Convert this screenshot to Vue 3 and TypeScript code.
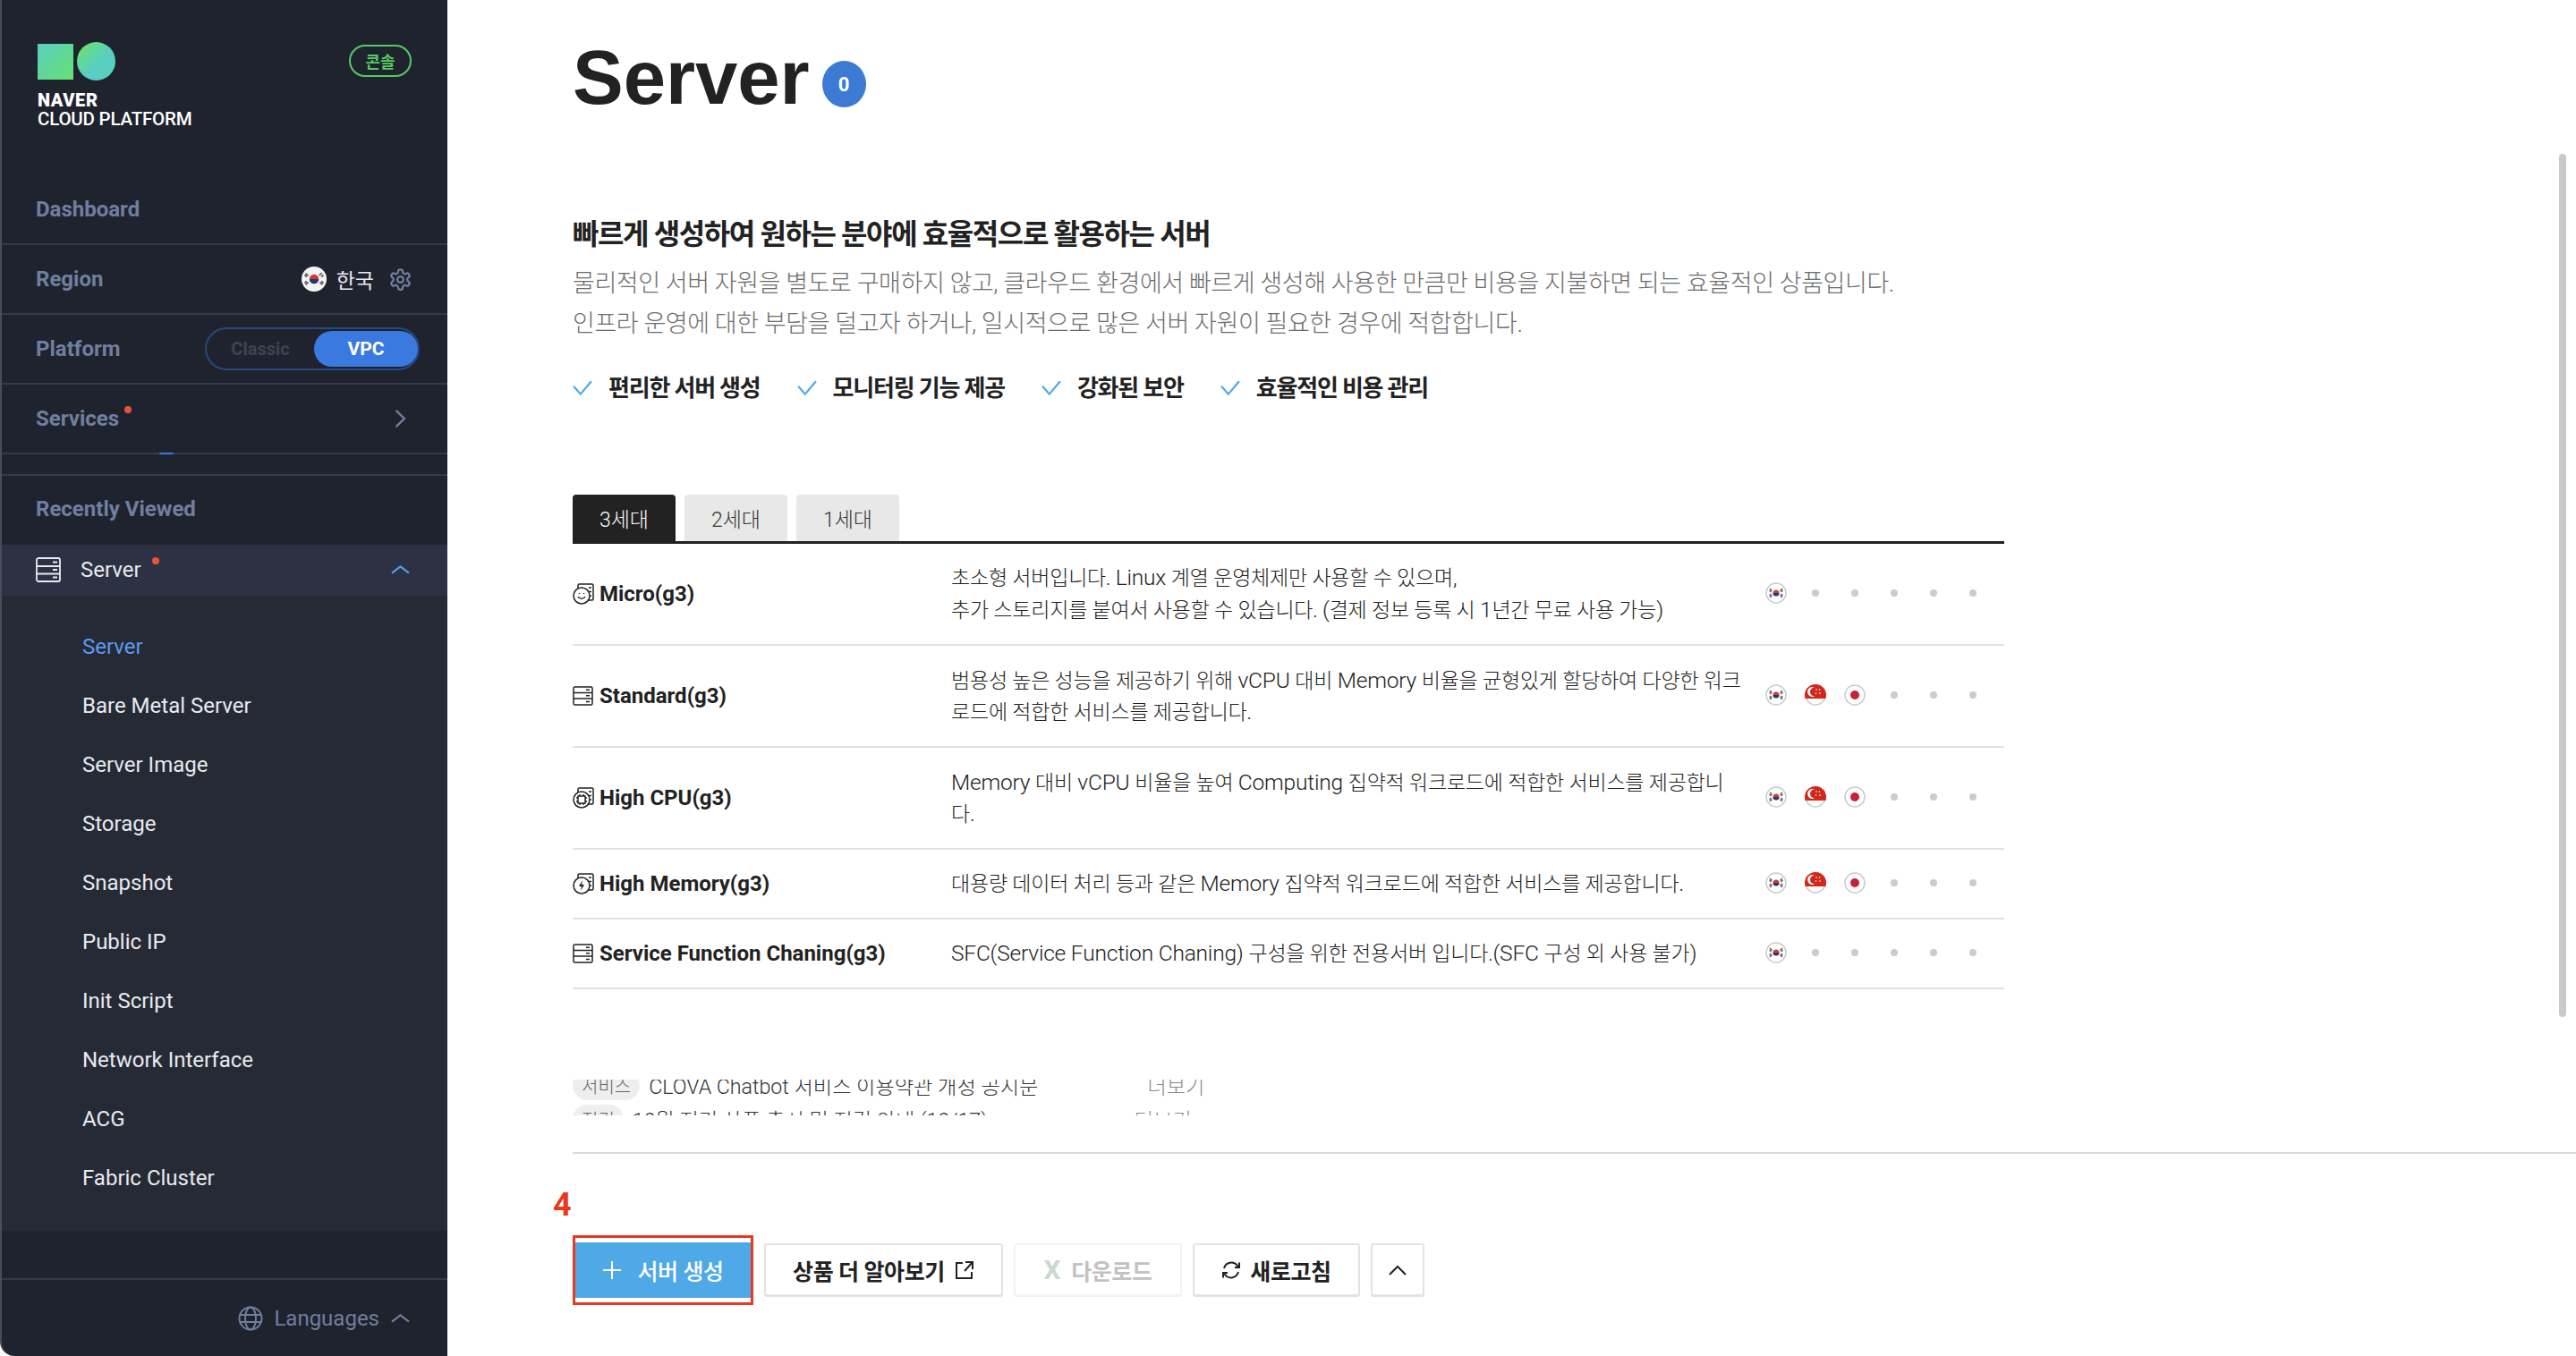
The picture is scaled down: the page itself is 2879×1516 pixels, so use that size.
<template>
  <div class="page">
    <aside class="sidebar">
      <div class="logo-area">
        <div class="logo">
          <div class="logo-shapes">
            <span class="logo-square"></span>
            <span class="logo-circle"></span>
          </div>
          <div class="logo-naver">NAVER</div>
          <div class="logo-cloud">CLOUD PLATFORM</div>
        </div>
        <span class="console-badge">콘솔</span>
      </div>

      <div class="side-row"><span class="side-label">Dashboard</span></div>
      <div class="side-row">
        <span class="side-label">Region</span>
        <div class="region">
          <svg class="region-flag" viewBox="0 0 24 24">
            <circle cx="12" cy="12" r="12" fill="#f4f4f4" />
            <path d="M7.500 12a4.500 4.500 0 0 1 9 0z" fill="#d8392c" />
            <path d="M7.500 12a4.500 4.500 0 0 0 9 0z" fill="#26337e" />
            <path d="M4 6.500l2.500 2.500M3 8l2 2M19.500 6l-2.500 2.500M21 8l-2 2M4 17.500l2.500-2.500M3 16l2-2M20 17.500L17.500 15M21 16l-2-2" stroke="#555" stroke-width="1.400" />
          </svg>
          <span class="region-name">한국</span>
          <svg class="gear" viewBox="0 0 24 24" fill="none" stroke="#6f7f9f" stroke-width="2">
            <path d="M12.220 2h-.44a2 2 0 0 0-2 2v.18a2 2 0 0 1-1 1.730l-.43.250a2 2 0 0 1-2 0l-.15-.08a2 2 0 0 0-2.730.730l-.22.380a2 2 0 0 0 .73 2.730l.15.1a2 2 0 0 1 1 1.720v.51a2 2 0 0 1-1 1.740l-.15.09a2 2 0 0 0-.73 2.730l.22.380a2 2 0 0 0 2.730.730l.15-.08a2 2 0 0 1 2 0l.43.250a2 2 0 0 1 1 1.730V20a2 2 0 0 0 2 2h.44a2 2 0 0 0 2-2v-.18a2 2 0 0 1 1-1.730l.43-.25a2 2 0 0 1 2 0l.15.08a2 2 0 0 0 2.730-.73l.22-.39a2 2 0 0 0-.73-2.730l-.15-.08a2 2 0 0 1-1-1.740v-.5a2 2 0 0 1 1-1.740l.15-.09a2 2 0 0 0 .73-2.730l-.22-.38a2 2 0 0 0-2.730-.73l-.15.08a2 2 0 0 1-2 0l-.43-.25a2 2 0 0 1-1-1.730V4a2 2 0 0 0-2-2z" />
            <circle cx="12" cy="12" r="3" />
          </svg>
        </div>
      </div>
      <div class="side-row">
        <span class="side-label">Platform</span>
        <div class="platform-toggle">
          <span class="platform-classic">Classic</span>
          <span class="platform-vpc">VPC</span>
        </div>
      </div>
      <div class="side-row services-row">
        <span class="side-label">Services<i class="red-dot services-dot"></i></span>
        <svg class="chev-right" viewBox="0 0 12 20" fill="none" stroke="#6f7f9f" stroke-width="2.200">
          <path d="M1.500 1.500L10 10l-8.500 8.500" />
        </svg>
        <span class="scroll-hint"></span>
      </div>

      <div class="recent-wrap">
        <div class="recent-title">Recently Viewed</div>
        <div class="server-row">
          <svg class="server-side-icon" viewBox="0 0 28 28" fill="none" stroke="#e8eaf0" stroke-width="1.800">
            <rect x="1" y="1" width="26" height="26" rx="2" />
            <path d="M1 10h26M1 18.500h26M19 5.500h5M19 14h5M19 22.500h5" />
          </svg>
          <span class="server-row-text">Server</span>
          <i class="red-dot server-dot"></i>
          <svg class="chev-up" viewBox="0 0 20 10" fill="none" stroke="#5a9bf0" stroke-width="2">
            <path d="M1 9l9-7 9 7" />
          </svg>
        </div>
        <ul class="sub-menu">
          <li v-for="(item, i) in subItems" :key="item" :class="{ active: i === 0 }">{{ item }}</li>
        </ul>
      </div>

      <div class="languages">
        <svg class="globe" viewBox="0 0 28 28" fill="none" stroke="#6f7f9f" stroke-width="2">
          <circle cx="14" cy="14" r="12.500" />
          <ellipse cx="14" cy="14" rx="6" ry="12.500" />
          <path d="M2 10h24M2 18h24" />
        </svg>
        <span class="lang-text">Languages</span>
        <svg class="lang-chev" viewBox="0 0 20 10" fill="none" stroke="#6f7f9f" stroke-width="2">
          <path d="M1 9l9-7 9 7" />
        </svg>
      </div>
    </aside>

    <main class="main">
      <header class="title-row">
        <h1>Server</h1>
        <span class="count-badge">0</span>
      </header>

      <h2 class="headline">빠르게 생성하여 원하는 분야에 효율적으로 활용하는 서버</h2>
      <p class="desc">
        물리적인 서버 자원을 별도로 구매하지 않고, 클라우드 환경에서 빠르게 생성해 사용한 만큼만 비용을 지불하면 되는 효율적인 상품입니다.<br />
        인프라 운영에 대한 부담을 덜고자 하거나, 일시적으로 많은 서버 자원이 필요한 경우에 적합합니다.
      </p>
      <div class="features">
        <span v-for="f in features" :key="f" class="feature">
          <svg class="check" viewBox="0 0 20 16" fill="none" stroke="#4fa9e6" stroke-width="2">
            <path d="M1 6l7 8L19 1" />
          </svg>
          {{ f }}
        </span>
      </div>

      <div class="tabs">
        <span v-for="(t, i) in tabs" :key="t" class="tab" :class="{ on: i === 0 }">{{ t }}</span>
      </div>

      <div class="table">
        <div v-for="row in rows" :key="row.name" class="row" :style="{ height: row.h + 'px' }">
          <div class="row-name">
            <svg class="row-icon" viewBox="0 0 24 24" fill="none" stroke="#222" stroke-width="1.500">
              <template v-if="row.icon === 'plain'">
                <rect x="1" y="2" width="21" height="20" rx="1.500" />
                <path d="M1 8.500h21M1 15h21M15 5.200h4M15 11.800h4M15 18.500h4" />
              </template>
              <template v-else>
                <rect x="6" y="1" width="17" height="18" rx="1.500" />
                <path d="M18 5h3M18 9.500h3M18 14h3" />
                <circle cx="10" cy="14" r="9" fill="#fff" />
                <template v-if="row.icon === 'smile'">
                  <path d="M6 15c1.500 3 6.500 3 8 0" />
                  <path d="M7.500 11v1M12.500 11v1" />
                </template>
                <template v-else-if="row.icon === 'cpu'">
                  <rect x="6" y="10" width="8" height="8" />
                  <path d="M8 8v2M12 8v2M8 18v2M12 18v2M4 12h2M4 16h2M14 12h2M14 16h2" />
                </template>
                <path v-else d="M11 8l-4 7h3l-1 5 4-7h-3z" fill="#222" stroke="none" />
              </template>
            </svg>
            <strong>{{ row.name }}</strong>
          </div>
          <div class="row-desc">
            <div v-for="(line, i) in row.lines" :key="i">
              <span v-for="(seg, j) in splitLatin(line)" :key="j" :class="{ lat: seg.latin }">{{ seg.text }}</span>
            </div>
          </div>
          <div class="row-regions">
            <span v-for="n in 6" :key="n" class="region-cell">
              <svg v-if="n === 1" class="flag" viewBox="0 0 24 24">
                <circle cx="12" cy="12" r="11" fill="#fff" stroke="#ccc" stroke-width="1.500" />
                <path d="M8.500 12a3.500 3.500 0 0 1 7 0z" fill="#d8392c" />
                <path d="M8.500 12a3.500 3.500 0 0 0 7 0z" fill="#26337e" />
                <path d="M5 7l2.500 2.500M4.500 9l2 2M19 7l-2.500 2.500M19.500 9l-2 2M5 17l2.500-2.500M4.500 15l2-2M19 17l-2.500-2.500M19.500 15l-2-2" stroke="#555" stroke-width="1.300" />
              </svg>
              <svg v-else-if="n === 2 && row.full" class="flag" viewBox="0 0 24 24">
                <circle cx="12" cy="12" r="11" fill="#fff" stroke="#ccc" stroke-width="1.500" />
                <path d="M0 12a12 12 0 0 1 24 0c0 1.500-.2 3-.6 4H.6C.2 15 0 13.500 0 12z" fill="#d2281c" />
                <path d="M11 3.500a5.500 5.500 0 1 0 0 10 5 5 0 1 1 0-10z" fill="#fff" />
                <circle cx="13" cy="6" r=".8" fill="#fff" />
                <circle cx="16.500" cy="6" r=".8" fill="#fff" />
                <circle cx="12.500" cy="10" r=".8" fill="#fff" />
                <circle cx="17" cy="10" r=".8" fill="#fff" />
              </svg>
              <svg v-else-if="n === 3 && row.full" class="flag" viewBox="0 0 24 24">
                <circle cx="12" cy="12" r="11" fill="#fff" stroke="#ccc" stroke-width="1.500" />
                <circle cx="12" cy="12" r="5" fill="#c4243a" />
              </svg>
              <i v-else class="region-dot"></i>
            </span>
          </div>
        </div>
      </div>

      <div class="notice-clip">
        <div class="notice-line first">
          <span class="notice-tag">서비스</span>
          <span class="notice-text">CLOVA Chatbot 서비스 이용약관 개정 공지문</span>
          <span class="notice-more">더보기</span>
        </div>
        <div class="notice-line second">
          <span class="notice-tag">점검</span>
          <span class="notice-text">10월 정기 상품 출시 및 점검 안내 (10/17)</span>
          <span class="notice-more">더보기</span>
        </div>
      </div>
      <div class="notice-rule"></div>

      <div class="step-num">4</div>
      <div class="actions">
        <div class="highlight">
          <button class="btn primary">
            <svg class="plus" viewBox="0 0 22 22" stroke="#fff" stroke-width="2"><path d="M11 1v20M1 11h20" /></svg>
            서버 생성
          </button>
        </div>
        <button class="btn more">
          상품 더 알아보기
          <svg class="ext" viewBox="0 0 22 22" fill="none" stroke="#222" stroke-width="2">
            <path d="M9 3H2v17h17v-7M12 2h8v8M20 2l-9 10" />
          </svg>
        </button>
        <button class="btn disabled"><span class="xl">X</span>다운로드</button>
        <button class="btn refresh">
          <svg class="sync" viewBox="0 0 22 22" fill="none" stroke="#222" stroke-width="2">
            <path d="M3 9a8.500 8.500 0 0 1 15-3l1.500 2M19 13a8.500 8.500 0 0 1-15 3l-1.500-2" />
            <path d="M20 2.500V8h-5M2 19.500V14h5" />
          </svg>
          새로고침
        </button>
        <button class="btn up">
          <svg class="up-icon" viewBox="0 0 20 12" fill="none" stroke="#222" stroke-width="2"><path d="M1 11l9-9 9 9" /></svg>
        </button>
      </div>
      <div class="scrollbar"></div>
    </main>
  </div>
</template>

<script setup lang="ts">
interface ServerRow {
  name: string
  icon: 'smile' | 'plain' | 'cpu' | 'bolt'
  lines: string[]
  full: boolean
  h: number
}

const subItems = [
  'Server',
  'Bare Metal Server',
  'Server Image',
  'Storage',
  'Snapshot',
  'Public IP',
  'Init Script',
  'Network Interface',
  'ACG',
  'Fabric Cluster'
]

const features = ['편리한 서버 생성', '모니터링 기능 제공', '강화된 보안', '효율적인 비용 관리']
const tabs = ['3세대', '2세대', '1세대']

const rows: ServerRow[] = [
  {
    name: 'Micro(g3)',
    icon: 'smile',
    lines: ['초소형 서버입니다. Linux 계열 운영체제만 사용할 수 있으며,', '추가 스토리지를 붙여서 사용할 수 있습니다. (결제 정보 등록 시 1년간 무료 사용 가능)'],
    full: false,
    h: 114
  },
  {
    name: 'Standard(g3)',
    icon: 'plain',
    lines: ['범용성 높은 성능을 제공하기 위해 vCPU 대비 Memory 비율을 균형있게 할당하여 다양한 워크', '로드에 적합한 서비스를 제공합니다.'],
    full: true,
    h: 114
  },
  {
    name: 'High CPU(g3)',
    icon: 'cpu',
    lines: ['Memory 대비 vCPU 비율을 높여 Computing 집약적 워크로드에 적합한 서비스를 제공합니', '다.'],
    full: true,
    h: 114
  },
  {
    name: 'High Memory(g3)',
    icon: 'bolt',
    lines: ['대용량 데이터 처리 등과 같은 Memory 집약적 워크로드에 적합한 서비스를 제공합니다.'],
    full: true,
    h: 78
  },
  {
    name: 'Service Function Chaning(g3)',
    icon: 'plain',
    lines: ['SFC(Service Function Chaning) 구성을 위한 전용서버 입니다.(SFC 구성 외 사용 불가)'],
    full: false,
    h: 78
  }
]

// 라틴 문자와 한글의 글자 크기가 달라서 구간을 나눈다
const splitLatin = (line: string) =>
  line
    .split(/([A-Za-z0-9()][A-Za-z0-9() ]*)/)
    .filter(Boolean)
    .map((text) => ({ text, latin: /^[A-Za-z0-9()]/.test(text) }))
</script>

<style scoped>
.page {
  display: flex;
  width: 2879px;
  height: 1516px;
  overflow: hidden;
  background: #fff;
  font-family: Roboto, "Noto Sans CJK KR", sans-serif;
  color: #222;
}

.sidebar {
  width: 500px;
  height: 1516px;
  flex-shrink: 0;
  background: #1f232e;
  border-left: 2px solid #4a4d59;
  border-bottom-left-radius: 16px;
  box-sizing: border-box;
  display: flex;
  flex-direction: column;
}

.logo-area {
  height: 196px;
  padding: 47px 40px 0 40px;
  display: flex;
  justify-content: space-between;
  align-items: flex-start;
  box-sizing: border-box;
}

.logo-shapes {
  display: flex;
  align-items: center;
  gap: 4px;
}

.logo-square {
  width: 40px;
  height: 40px;
  background: linear-gradient(135deg, #58cfc0, #68e070);
}

.logo-circle {
  width: 43px;
  height: 43px;
  border-radius: 50%;
  background: linear-gradient(135deg, #68e070 10%, #58cfc0 55%);
}

.logo-naver {
  margin-top: 12px;
  color: #fff;
  font-size: 20px;
  font-weight: 900;
  line-height: 21px;
  letter-spacing: .6px;
}

.logo-cloud {
  color: #fff;
  font-size: 20.500px;
  font-weight: 500;
  line-height: 21px;
  letter-spacing: -.2px;
}

.console-badge {
  margin-top: 3px;
  width: 70px;
  height: 36px;
  box-sizing: border-box;
  border: 2px solid #55cb62;
  border-radius: 18px;
  color: #55cb62;
  font-size: 18px;
  font-weight: 700;
  display: flex;
  align-items: center;
  justify-content: center;
}

.side-row {
  position: relative;
  height: 78px;
  box-sizing: border-box;
  border-bottom: 2px solid #323a4d;
  padding: 0 38px;
  display: flex;
  align-items: center;
  justify-content: space-between;
}

.side-label {
  position: relative;
  color: #6f7f9f;
  font-size: 24px;
  font-weight: 700;
}

.region {
  display: flex;
  align-items: center;
}

.region-flag {
  width: 28px;
  height: 28px;
  margin-right: 11px;
}

.region-name {
  color: #e8eaf0;
  font-size: 23px;
  margin-right: 16px;
}

.gear {
  width: 27px;
  height: 27px;
  margin-right: 1px;
}

.platform-toggle {
  position: relative;
  width: 240px;
  height: 48px;
  margin-right: -7px;
  box-sizing: border-box;
  border: 2px solid #244a7e;
  border-radius: 24px;
  display: flex;
  align-items: center;
}

.platform-classic {
  width: 120px;
  text-align: center;
  color: #3e4452;
  font-size: 20px;
  font-weight: 700;
}

.platform-vpc {
  width: 116px;
  height: 40px;
  border-radius: 20px;
  background: #3a7ae0;
  color: #fff;
  font-size: 21px;
  font-weight: 700;
  display: flex;
  align-items: center;
  justify-content: center;
}

.red-dot {
  position: absolute;
  width: 8px;
  height: 8px;
  border-radius: 50%;
  background: #e8533c;
}

.services-dot {
  right: -14px;
  top: 0;
}

.chev-right {
  width: 13px;
  height: 22px;
  margin-right: 8px;
}

.scroll-hint {
  position: absolute;
  left: 176px;
  bottom: -2px;
  width: 16px;
  height: 2px;
  border-radius: 0 0 8px 8px;
  background: #3a7ae0;
}

.recent-wrap {
  margin-top: 22px;
  border-top: 2px solid #323a4d;
  height: 901px;
  box-sizing: border-box;
  border-bottom: 2px solid #323a4d;
}

.recent-title {
  height: 77px;
  padding-left: 38px;
  color: #6f7f9f;
  font-size: 24px;
  font-weight: 700;
  line-height: 75px;
}

.server-row {
  height: 57px;
  padding: 0 38px 2px;
  box-sizing: border-box;
  background: #2c3243;
  display: flex;
  align-items: center;
  position: relative;
}

.server-side-icon {
  width: 28px;
  height: 28px;
  margin-right: 22px;
}

.server-row-text {
  color: #e8eaf0;
  font-size: 24px;
}

.server-dot {
  left: 168px;
  top: 14px;
}

.chev-up {
  width: 21px;
  height: 11px;
  margin-left: auto;
  margin-right: 4px;
}

.sub-menu {
  list-style: none;
  margin: 0;
  padding: 24px 0 26px 90px;
  background: #262a35;
}

.sub-menu li {
  height: 66px;
  line-height: 66px;
  color: #e8eaf0;
  font-size: 24px;
}

.sub-menu li.active {
  color: #5a9bf0;
}

.languages {
  flex: 1;
  display: flex;
  align-items: center;
  justify-content: flex-end;
  padding-right: 42px;
}

.globe {
  width: 28px;
  height: 28px;
  margin-right: 12px;
}

.lang-text {
  color: #6f7f9f;
  font-size: 24px;
  margin-right: 13px;
}

.lang-chev {
  width: 21px;
  height: 11px;
}

.main {
  position: relative;
  flex: 1;
  padding-left: 140px;
  box-sizing: border-box;
}

.title-row {
  height: 172px;
  display: flex;
  align-items: flex-start;
}

.title-row h1 {
  margin: 32px 0 0;
  font-family: "Liberation Sans", sans-serif;
  font-size: 85px;
  font-weight: 700;
  line-height: 110px;
  color: #222;
}

.count-badge {
  margin: 68px 0 0 14px;
  width: 49px;
  height: 52px;
  border-radius: 50%;
  background: #3b7bd4;
  color: #fff;
  font-size: 22px;
  font-weight: 700;
  display: flex;
  align-items: center;
  justify-content: center;
}

.headline {
  margin: 68px 0 0;
  font-size: 32px;
  line-height: 44px;
  font-weight: 700;
  letter-spacing: -1.400px;
  color: #222;
}

.desc {
  margin: 11px 0 0;
  font-size: 27px;
  line-height: 45px;
  font-weight: 300;
  letter-spacing: -.42px;
  color: #6e6e6e;
}

.features {
  margin-top: 27px;
  display: flex;
  gap: 41px;
}

.feature {
  display: flex;
  align-items: center;
  gap: 18px;
  font-size: 26px;
  font-weight: 700;
  line-height: 44px;
  letter-spacing: -1.200px;
}

.check {
  width: 22px;
  height: 18px;
}

.tabs {
  width: 1600px;
  margin-top: 97px;
  height: 55px;
  display: flex;
  gap: 10px;
  box-sizing: border-box;
  border-bottom: 3px solid #222;
}

.tab {
  width: 115px;
  height: 52px;
  border-radius: 4px 4px 0 0;
  background: #e8e8e8;
  color: #333;
  font-size: 23px;
  font-weight: 300;
  display: flex;
  align-items: center;
  justify-content: center;
}

.tab.on {
  background: #222;
  color: #fff;
}

.table {
  width: 1600px;
}

.row {
  display: flex;
  align-items: center;
  box-sizing: border-box;
  border-bottom: 2px solid #e2e2e2;
}

.row-name {
  width: 423px;
  flex-shrink: 0;
  display: flex;
  align-items: center;
  font-size: 24px;
}

.row-name strong {
  font-weight: 700;
}

.row-icon {
  width: 24px;
  height: 24px;
  margin-right: 6px;
}

.row-desc {
  width: 900px;
  flex-shrink: 0;
  font-size: 23px;
  line-height: 35px;
  font-weight: 300;
  color: #222;
  letter-spacing: -.2px;
  white-space: nowrap;
}

.lat {
  font-size: 24.500px;
}

.row-regions {
  display: flex;
  margin-top: -2px;
}

.region-cell {
  width: 44px;
  height: 24px;
  display: flex;
  align-items: center;
  justify-content: center;
}

.flag {
  width: 24px;
  height: 24px;
}

.region-dot {
  width: 8px;
  height: 8px;
  border-radius: 50%;
  background: #ccc;
}

.notice-clip {
  margin-top: 101px;
  height: 40px;
  overflow: hidden;
}

.notice-line {
  display: flex;
  align-items: center;
  height: 40px;
  font-size: 23.200px;
  font-weight: 300;
  white-space: nowrap;
}

.notice-line.first {
  margin-top: -14px;
}

.notice-line.second {
  margin-top: -2px;
}

.notice-tag {
  padding: 2px 10px;
  border-radius: 18px;
  background: #eee;
  color: #666;
  font-size: 20px;
  margin-right: 10px;
}

.notice-text {
  color: #333;
}

.notice-more {
  margin-left: 122px;
  color: #888;
}

.second .notice-more {
  margin-left: 164px;
}

.notice-rule {
  margin-top: 41px;
  height: 2px;
  background: #d9d9d9;
}

.step-num {
  margin: 32px 0 0 -22px;
  height: 59px;
  color: #e8391c;
  font-size: 36px;
  font-weight: 700;
  line-height: 50px;
}

.actions {
  margin-top: 0;
  height: 78px;
  display: flex;
  align-items: center;
  gap: 12px;
}

.highlight {
  width: 202px;
  height: 78px;
  box-sizing: border-box;
  border: 3px solid #e8391c;
  padding: 5px 0;
}

.btn {
  height: 60px;
  box-sizing: border-box;
  border: 2px solid #e3e3e3;
  border-bottom-width: 3px;
  border-radius: 3px;
  background: #fff;
  font-family: inherit;
  font-size: 25px;
  font-weight: 700;
  letter-spacing: -.4px;
  color: #222;
  display: flex;
  align-items: center;
  justify-content: center;
  padding: 0;
}

.primary {
  width: 100%;
  height: 100%;
  border: none;
  border-radius: 0;
  background: #4fa9e6;
  color: #fff;
  font-weight: 500;
}

.plus {
  width: 22px;
  height: 22px;
  margin-right: 17px;
}

.more {
  width: 267px;
}

.ext {
  width: 22px;
  height: 22px;
  margin-left: 11px;
}

.disabled {
  width: 188px;
  border-color: #f2f2f2;
  color: #c2c2c2;
}

.xl {
  margin-right: 12px;
  color: #c8dacd;
  font-size: 30px;
}

.refresh {
  width: 187px;
}

.sync {
  width: 22px;
  height: 22px;
  margin-right: 10px;
}

.up {
  width: 60px;
}

.up-icon {
  width: 20px;
  height: 12px;
}

.scrollbar {
  position: absolute;
  right: 11px;
  top: 172px;
  width: 8px;
  height: 965px;
  border-radius: 4px;
  background: #c9c9c9;
}
</style>

<style>
html,
body {
  margin: 0;
  background: #fff;
}
</style>
